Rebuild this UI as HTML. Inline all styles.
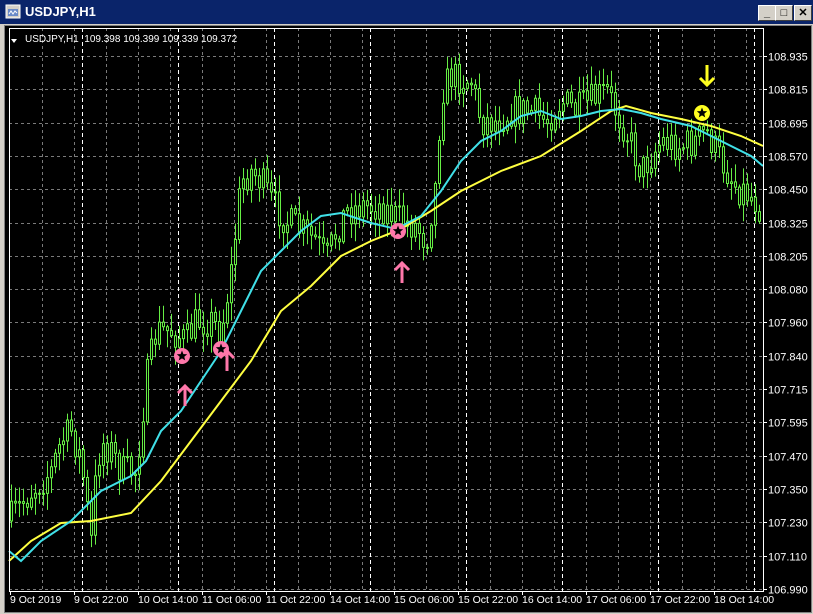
<!DOCTYPE html>
<html><head><meta charset="utf-8"><style>
body{margin:0;width:813px;height:614px;overflow:hidden;background:#d4d0c8;font-family:"Liberation Sans",sans-serif}
#title{position:absolute;left:0;top:0;width:813px;height:24px;background:#0a246a;}
#title span{position:absolute;left:25px;top:4px;color:#fff;font-weight:bold;font-size:13px}
.btn{position:absolute;top:5px;width:16px;height:14px;background:#d4d0c8;border:1px solid;border-color:#fff #404040 #404040 #fff;font-size:11px;text-align:center;line-height:14px;color:#000;font-weight:bold}
#chart{position:absolute;left:4px;top:25px;width:806px;height:586px;background:#000;border:1px solid #808080;overflow:hidden}
</style></head><body>
<div id="title">
<svg style="position:absolute;left:5px;top:4px" width="16" height="16"><rect x="1" y="1" width="14" height="13" fill="#d4d0c8" stroke="#fff"/><rect x="3" y="5" width="10" height="7" fill="#6a8ac8"/><path d="M4 10 L6 7 L8 10 L10 7 L12 9" stroke="#fff" fill="none"/></svg>
<span>USDJPY,H1</span>
<div class="btn" style="left:758px">_</div><div class="btn" style="left:775px">□</div><div class="btn" style="left:794px">✕</div>
</div>
<div id="chart">
<svg id="s" width="806" height="586" viewBox="4 25 806 586" style="position:absolute;left:0;top:0" font-family="Liberation Sans, sans-serif" font-size="11"></svg>
</div>
<script>
var s=document.getElementById('s'),h='';
var L=8,R=762,T=27,B=590;
var prices=['108.935','108.815','108.695','108.570','108.450','108.325','108.205','108.080','107.960','107.840','107.715','107.595','107.470','107.350','107.230','107.110','106.990'];
var g='';
for(var i=0;i<17;i++){var y=Math.round(55+i*33.3)+0.5;g+='M'+L+' '+y+'H'+R;h+='<line x1="'+R+'" y1="'+y+'" x2="'+(R+4)+'" y2="'+y+'" stroke="#fff"/>';h+='<text x="767" y="'+(y+4)+'" fill="#fff">'+prices[i]+'</text>';}
for(var gx=41;gx<R;gx+=32){g+='M'+(gx+0.5)+' '+T+'V'+B;}
h+='<path d="'+g+'" stroke="#7a7a7a" stroke-dasharray="3,3" fill="none"/>';
var w='';[81,177,273,369,465,561,657,753].forEach(function(x){w+='M'+(x+0.5)+' '+T+'V'+B;});
h+='<path d="'+w+'" stroke="#fff" stroke-dasharray="4,3" fill="none"/>';
var kp=[[8,520],[30,490],[50,470],[60,440],[70,430],[80,460],[90,540],[95,470],[100,440],[110,450],[120,470],[135,470],[145,380],[155,330],[170,330],[185,340],[195,320],[210,320],[220,330],[230,270],[240,180],[250,170],[260,180],[270,200],[285,220],[300,230],[315,240],[325,260],[335,230],[345,210],[360,205],[380,205],[400,220],[415,225],[425,240],[435,180],[440,90],[450,75],[470,80],[480,120],[495,120],[510,110],[530,110],[545,120],[560,100],[575,110],[590,100],[605,90],[615,110],[625,130],[640,170],[660,140],[680,145],[695,140],[705,130],[720,160],[735,185],[750,195],[762,210]];
function interp(x){for(var i=0;i<kp.length-1;i++){if(x<=kp[i+1][0]){var t=(x-kp[i][0])/(kp[i+1][0]-kp[i][0]);return kp[i][1]+t*(kp[i+1][1]-kp[i][1]);}}return kp[kp.length-1][1];}
var seed=7;function rnd(){seed=(seed*16807)%2147483647;return seed/2147483647;}
var prev=interp(8),wk='',bd='';
for(var cx=10;cx<R-2;cx+=4){var c=interp(cx)+(rnd()-0.5)*34;var o=prev;var tp=Math.max(T+2,Math.min(o,c)-rnd()*16-2),bt=Math.min(B-2,Math.max(o,c)+rnd()*16+2);
wk+='M'+(cx+0.5)+' '+tp.toFixed(1)+'V'+bt.toFixed(1);
var by=Math.min(o,c),bh=Math.max(1,Math.abs(o-c));bd+='M'+(cx-0.5)+' '+by.toFixed(1)+'h2v'+bh.toFixed(1)+'h-2z';prev=c;}
h+='<path d="'+wk+'" stroke="#66ee44" fill="none"/><path d="'+bd+'" stroke="#66ee44" fill="#000"/>';
var cy=[[8,550],[20,560],[40,540],[70,520],[100,490],[130,475],[145,460],[160,430],[180,410],[200,380],[220,350],[240,310],[260,270],[280,250],[300,230],[320,215],[340,212],[370,222],[395,228],[420,215],[440,190],[460,160],[480,140],[500,130],[520,115],[540,110],[560,118],[580,115],[600,110],[620,108],[640,112],[660,118],[690,125],[710,135],[730,145],[750,155],[762,165]];
var ye=[[8,560],[30,540],[60,522],[90,520],[130,512],[160,480],[190,440],[220,400],[250,360],[280,310],[310,285],[340,255],[370,240],[400,228],[430,210],[460,190],[500,170],[540,155],[580,130],[610,110],[625,105],[650,112],[680,118],[710,125],[740,135],[762,145]];
h+='<polyline points="'+ye.join(' ')+'" fill="none" stroke="#ffff40" stroke-width="2"/>';
h+='<polyline points="'+cy.join(' ')+'" fill="none" stroke="#40e0e8" stroke-width="2"/>';
function star(x,y,c){var p=[];for(var k=0;k<10;k++){var r=k%2?2.4:5.5,a=-Math.PI/2+k*Math.PI/5;p.push((x+r*Math.cos(a)).toFixed(1)+','+(y+r*Math.sin(a)).toFixed(1));}return '<circle cx="'+x+'" cy="'+y+'" r="8" fill="'+c+'"/><polygon points="'+p.join(' ')+'" fill="#000"/>';}
function up(x,y,c){return '<path d="M'+x+' '+(y+12)+' V'+(y-8)+' M'+(x-7)+' '+(y-1)+' L'+x+' '+(y-8)+' L'+(x+7)+' '+(y-1)+'" stroke="'+c+'" stroke-width="3" fill="none"/>';}
function dn(x,y,c){return '<path d="M'+x+' '+(y-12)+' V'+(y+8)+' M'+(x-7)+' '+(y+1)+' L'+x+' '+(y+8)+' L'+(x+7)+' '+(y+1)+'" stroke="'+c+'" stroke-width="3" fill="none"/>';}
h+=star(181,355,'#ff77aa')+star(220,348,'#ff77aa')+star(397,230,'#ff77aa')+star(701,112,'#ffff20');
h+=up(184,393,'#ff77aa')+up(226,358,'#ff77aa')+up(401,270,'#ff77aa')+dn(706,76,'#ffff20');
h+='<rect x="'+(L+0.5)+'" y="'+(T+0.5)+'" width="'+(R-L)+'" height="'+(B-T)+'" fill="none" stroke="#fff"/>';
h+='<polygon points="10,38 16,38 13,42" fill="#fff"/><text x="24" y="41" fill="#fff" font-size="10" xml:space="preserve">USDJPY,H1  109.398 109.399 109.339 109.372</text>';
var tl=['9 Oct 2019','9 Oct 22:00','10 Oct 14:00','11 Oct 06:00','11 Oct 22:00','14 Oct 14:00','15 Oct 06:00','15 Oct 22:00','16 Oct 14:00','17 Oct 06:00','17 Oct 22:00','18 Oct 14:00'];
for(var i=0;i<tl.length;i++){var x=9+i*64;h+='<line x1="'+(x+0.5)+'" y1="'+B+'" x2="'+(x+0.5)+'" y2="'+(B+4)+'" stroke="#fff"/><text x="'+x+'" y="602" fill="#fff" font-size="10.5">'+tl[i]+'</text>';}
s.innerHTML=h;
</script>
</body></html>
